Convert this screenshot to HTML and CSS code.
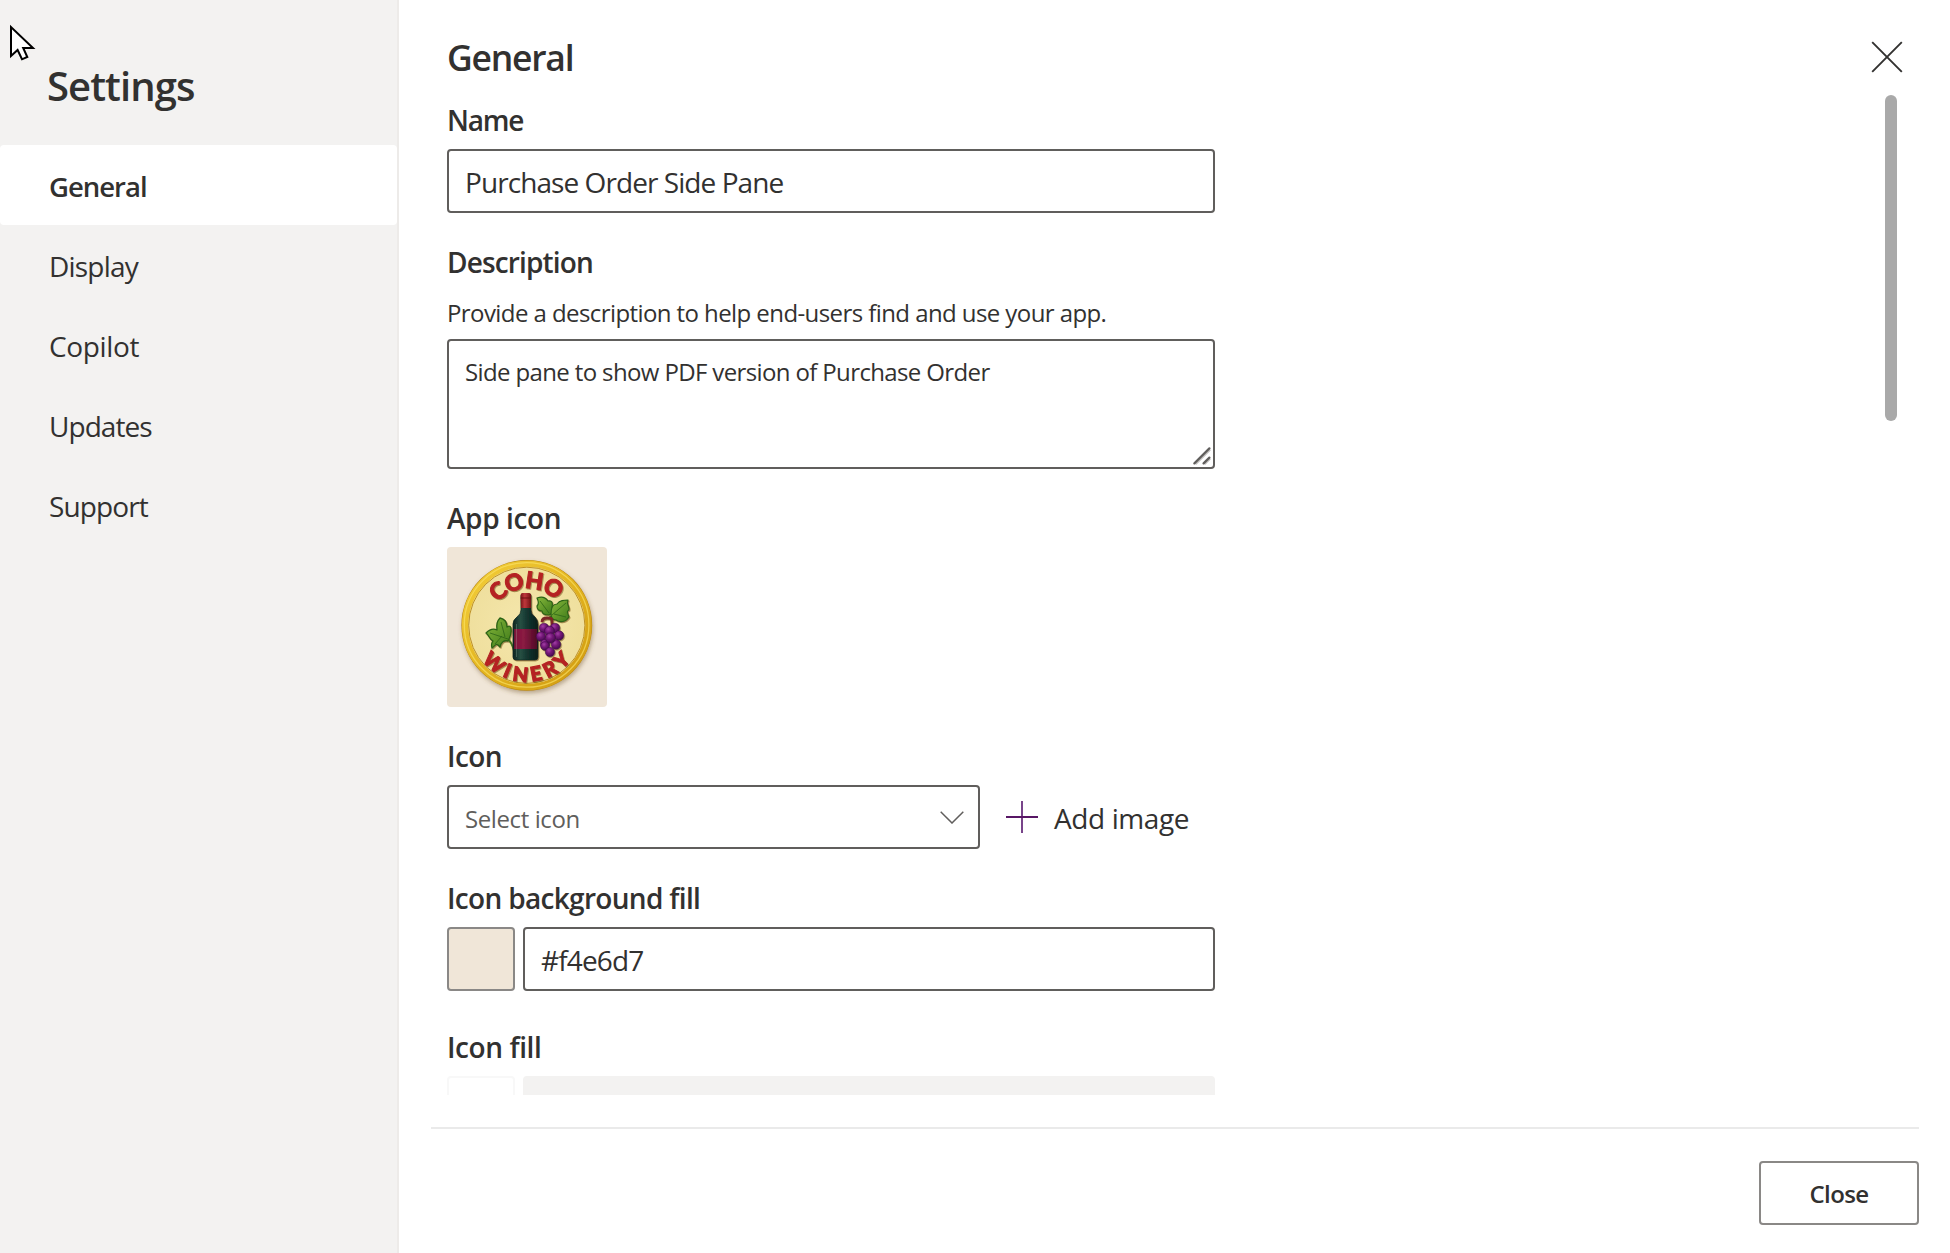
FILE: index.html
```html
<!DOCTYPE html>
<html lang="en">
<head>
<meta charset="utf-8">
<title>Settings</title>
<link rel="stylesheet" href="styles.css">
</head>
<body>
<div class="dialog">
  <aside class="sidebar">
    <h1 class="sidebar-title"><span class="t-settings">Settings</span></h1>
    <nav class="nav">
      <a class="nav-item active"><span class="t-nav-general">General</span></a>
      <a class="nav-item"><span class="t-display">Display</span></a>
      <a class="nav-item"><span class="t-copilot">Copilot</span></a>
      <a class="nav-item"><span class="t-updates">Updates</span></a>
      <a class="nav-item"><span class="t-support">Support</span></a>
    </nav>
  </aside>

  <main class="main">
    <header class="main-header">
      <h2 class="main-title">General</h2>
      <button class="dismiss" aria-label="Dismiss">
        <svg width="32" height="32" viewBox="0 0 32 32"><path d="M1.2 1.2 30.8 30.8M30.8 1.2 1.2 30.8" stroke="#323130" stroke-width="1.9" fill="none"/></svg>
      </button>
    </header>

    <div class="scroll-area">
      <form class="form">
        <label class="label t-name">Name</label>
        <input class="field t-value" type="text" value="Purchase Order Side Pane">

        <label class="label t-desc">Description</label>
        <p class="hint">Provide a description to help end-users find and use your app.</p>
        <div class="textarea">
          <span class="textarea-text">Side pane to show PDF version of Purchase Order</span>
          <svg class="grip" width="18" height="18" viewBox="0 0 18 18" fill="none" stroke-linecap="round"><path d="M3.2 17 17 3.2M12.2 17 17 12.2" stroke="#c8c6c4" stroke-width="1.5"/><path d="M1.4 16.4 16.4 1.4M10.6 16.4 16.4 10.6" stroke="#605e5c" stroke-width="2.2"/></svg>
        </div>

        <label class="label t-appicon">App icon</label>
        <div class="app-icon">
          <svg width="160" height="160" viewBox="0 0 160 160">
            <defs>
              <linearGradient id="ring" x1="0" y1="0" x2="1" y2="1"><stop offset="0" stop-color="#f4cf3a"/><stop offset=".5" stop-color="#e3b521"/><stop offset="1" stop-color="#cf980f"/></linearGradient>
              <radialGradient id="face"><stop offset="0" stop-color="#f5e7ad"/><stop offset="1" stop-color="#efdf9d"/></radialGradient>
              <linearGradient id="glass"><stop offset="0" stop-color="#0c2420"/><stop offset=".3" stop-color="#284f43"/><stop offset=".55" stop-color="#143730"/><stop offset="1" stop-color="#081d1a"/></linearGradient>
              <linearGradient id="tag"><stop offset="0" stop-color="#7d1239"/><stop offset=".4" stop-color="#8b1b43"/><stop offset="1" stop-color="#4f0a25"/></linearGradient>
              <linearGradient id="cap"><stop offset="0" stop-color="#7c1419"/><stop offset=".4" stop-color="#bf383b"/><stop offset="1" stop-color="#741015"/></linearGradient>
              <radialGradient id="grape" cx=".38" cy=".32" r=".7"><stop offset="0" stop-color="#a23fa5"/><stop offset=".45" stop-color="#741878"/><stop offset="1" stop-color="#440a4d"/></radialGradient>
              <linearGradient id="leaf" x1="0" y1="0" x2="1" y2="1"><stop offset="0" stop-color="#86b83a"/><stop offset="1" stop-color="#3f7a1b"/></linearGradient>
              <filter id="drop" x="-20%" y="-20%" width="140%" height="140%"><feDropShadow dx="1" dy="2.5" stdDeviation="2" flood-color="#73562c" flood-opacity=".45"/></filter>
              <filter id="lift" x="-20%" y="-20%" width="140%" height="140%"><feDropShadow dx=".8" dy="1" stdDeviation=".6" flood-color="#6b4a18" flood-opacity=".6"/></filter>
              <path id="arc-top" d="M42.7 79.3a38 38 0 0 1 76 0"/>
              <path id="arc-bottom" d="M23.2 78.3a56.5 56.5 0 0 0 113 0"/>
            </defs>
            <circle cx="79.8" cy="78.3" r="65.4" fill="#b7860e" filter="url(#drop)"/>
            <circle cx="79.8" cy="78.3" r="61.7" fill="url(#face)" stroke="url(#ring)" stroke-width="6.4"/>
            <circle cx="79.6" cy="77.9" r="62.3" fill="none" stroke="#fbe368" stroke-opacity=".65" stroke-width="1.3"/>
            <circle cx="79.8" cy="78.3" r="58.1" fill="none" stroke="#bd9024" stroke-width="1"/>
            <g class="badge-text" filter="url(#lift)">
              <text font-size="23"><textPath href="#arc-top" startOffset="49%" text-anchor="middle" textLength="66">COHO</textPath></text>
              <text font-size="20"><textPath href="#arc-bottom" startOffset="50%" text-anchor="middle" textLength="102">WINERY</textPath></text>
            </g>
            <g filter="url(#lift)" stroke-linejoin="round">
              <path d="M59 90q6 5 8 14" stroke="#3d741d" stroke-width="1.8" fill="none"/>
              <path d="M61 94C57 93 54 95 53 100C49 95 49 98 45 101C44 97 45 95 46 94C42 92 42 88 39 86C43 82 46 81 50 83C49 77 51 73 53 71C58 72 60 76 60 80C63 78 64 80 64 82C65 87 63 90 61 94Z" fill="url(#leaf)" stroke="#2c6317" stroke-width="1.3"/>
              <path d="M61 92 43 86M58 90 54 75M55 89l-7 8" stroke="#2c6317" stroke-width=".8" fill="none"/>
              <path d="M104 87q3-8-1-18" stroke="#45701e" stroke-width="2" fill="none"/>
              <path d="M102 68C97 68 95 66 95 64C91 64 90 61 90 59C92 57 91 53 90 51C95 49 99 51 101 54C105 53 106 56 105 60C106 64 105 67 102 68Z" fill="url(#leaf)" stroke="#2c6317" stroke-width="1.2"/>
              <path d="M104 67C104 61 106 57 110 57C113 53 117 53 121 53C119 57 123 60 122 63C119 64 121 67 122 70C119 75 113 76 109 73C106 73 104 71 104 67Z" fill="url(#leaf)" stroke="#2c6317" stroke-width="1.2"/>
              <path d="M102 66 93 54M105 68l14-12M107 67l12 3" stroke="#2c6317" stroke-width=".8" fill="none"/>
              <path d="M95 75q0-4 5-4q5 0 5 2v6" stroke="#7c2825" stroke-width="2.8" fill="none"/>
            </g>
            <g filter="url(#lift)">
              <path d="M74 49Q74 47 76 47H82Q84 47 84 49V63Q84 67 88 70Q91 73 91 77V110Q91 113 88 113H69Q66 113 66 110V77Q66 73 70 70Q74 67 74 63Z" fill="url(#glass)" stroke="#0d2822" stroke-width=".8"/>
              <path d="M73.6 48Q73.6 46 75.6 46H82Q84 46 84 48V61H74Z" fill="url(#cap)"/>
              <path d="M73.6 51h10.4" stroke="#6d0e13" stroke-width="1"/>
              <path d="M67.2 82h23v20h-23z" fill="url(#tag)"/>
              <path d="M69.5 77v33" stroke="#b8d2bd" stroke-opacity=".25" stroke-width="1"/>
            </g>
            <g fill="url(#grape)" stroke="#3b0745" stroke-width=".5" filter="url(#lift)">
              <circle cx="97" cy="81" r="4.8"/><circle cx="108" cy="81" r="4.8"/><circle cx="102.5" cy="84" r="5"/>
              <circle cx="94" cy="89.5" r="4.8"/><circle cx="112" cy="88.5" r="4.8"/><circle cx="98" cy="97" r="4.7"/>
              <circle cx="109" cy="97.5" r="4.8"/><circle cx="103.5" cy="91" r="5.1"/><circle cx="98" cy="99" r="4.4"/>
              <circle cx="103" cy="105" r="4.7"/>
            </g>
          </svg>
        </div>

        <label class="label t-icon">Icon</label>
        <div class="icon-row">
          <div class="select">
            <span class="placeholder">Select icon</span>
            <svg width="24" height="13" viewBox="0 0 24 13"><path d="M.7.8 12 12 23.3.8" fill="none" stroke="#605e5c" stroke-width="1.5"/></svg>
          </div>
          <button class="add-image" type="button">
            <svg width="32" height="32" viewBox="0 0 32 32"><path d="M16 0v32" stroke="#78448a" stroke-width="2"/><path d="M0 16h32" stroke="#581765" stroke-width="2"/></svg>
            <span class="t-add">Add image</span>
          </button>
        </div>

        <label class="label t-bgfill">Icon background fill</label>
        <div class="color-row">
          <span class="swatch"></span>
          <input class="field t-hex" type="text" value="#f4e6d7">
        </div>

        <label class="label label-last t-iconfill">Icon fill</label>
        <div class="color-row">
          <span class="swatch swatch-disabled"></span>
          <span class="field field-disabled"></span>
        </div>
      </form>
      <div class="scrollbar"><div class="thumb"></div></div>
    </div>

    <footer class="footer">
      <button class="close"><span class="t-close">Close</span></button>
    </footer>
  </main>
</div>
<svg class="cursor" width="28" height="40" viewBox="0 0 28 40"><path d="M3 3V32L9.6 26 14 35.3 19.3 33 15.2 24H25Z" fill="#fff" stroke="#000" stroke-width="2"/></svg>
</body>
</html>
```
FILE: styles.css
```css
* { box-sizing: border-box; }

body {
  margin: 0;
  color: #323130;
  background: #fff;
  font-family: "Open Sans", "Noto Sans", sans-serif;
  font-size: 28px;
  overflow: hidden;
}

button, input { font: inherit; color: inherit; }
button { background: none; border: 0; padding: 0; }

.dialog { display: flex; width: 100%; height: 1253px; }

/* Left navigation */
.sidebar {
  flex: none;
  width: 399px;
  background: #f3f2f1;
  border-right: 2px solid #edebe9;
}
.sidebar-title {
  margin: 0;
  height: 145px;
  padding: 58px 0 0 47px;
  font-size: 40px;
  line-height: 56px;
  font-weight: 600;
}
.nav { display: flex; flex-direction: column; }
.nav-item {
  height: 80px;
  padding-left: 49px;
  line-height: 82px;
  border-radius: 4px;
}
.nav-item.active { background: #fff; font-weight: 600; }

/* Main panel */
.main {
  flex: 1;
  display: flex;
  flex-direction: column;
  padding: 0 31px 28px 32px;
}
.main-header {
  display: flex;
  justify-content: space-between;
  height: 95px;
  padding: 33px 16px 0;
}
.main-title {
  margin: 0;
  font-size: 35.5px;
  line-height: 48px;
  font-weight: 600;
  letter-spacing: -1.25px;
}
.dismiss { height: 32px; margin-top: 8px; }
.dismiss svg, .add-image svg { display: block; }

.scroll-area {
  display: flex;
  justify-content: space-between;
  height: 1000px;
  padding: 0 22px 0 16px;
  overflow: hidden;
}
.scrollbar { width: 12px; }
.thumb { height: 326px; border-radius: 6px; background: #a9a9a9; }

/* Form */
.form { width: 768px; padding-top: 4px; }
.label {
  display: block;
  width: max-content;
  height: 40px;
  line-height: 42px;
  font-weight: 600;
  margin: 28px 0 10px;
}
.label:first-child { margin-top: 0; }
.label-last { margin-top: 35px; }
.field {
  display: block;
  width: 100%;
  height: 64px;
  padding: 2px 16px 0;
  border: 2px solid #605e5c;
  border-radius: 4px;
  background: #fff;
  outline: 0;
}
.field-disabled { background: #f3f2f1; border-color: #f3f2f1; }
.t-desc { margin-bottom: 13px; }
.hint {
  margin: 0 0 8px;
  padding-top: 1px;
  width: max-content;
  font-size: 24px;
  line-height: 36px;
  letter-spacing: -0.58px;
}
.textarea {
  display: flex;
  justify-content: space-between;
  height: 130px;
  padding: 13px 2px 2px 16px;
  border: 2px solid #605e5c;
  border-radius: 4px;
  font-size: 24px;
  line-height: 36px;
}
.textarea-text { white-space: nowrap; letter-spacing: -0.63px; }
.grip { align-self: flex-end; }

.app-icon {
  width: 160px;
  height: 160px;
  border-radius: 4px;
  background: #f0e6d8;
  overflow: hidden;
}
.app-icon svg { display: block; }
.badge-text {
  font-family: Lato, "Open Sans", sans-serif;
  font-weight: 900;
  fill: #b52222;
  stroke: #b52222;
  stroke-width: 1px;
}

.icon-row { display: flex; gap: 26px; }
.select {
  display: flex;
  align-items: center;
  justify-content: space-between;
  width: 533px;
  height: 64px;
  padding: 0 14px 0 16px;
  border: 2px solid #605e5c;
  border-radius: 4px;
  font-size: 24px;
  color: #605e5c;
}
.placeholder { padding-top: 2px; letter-spacing: -0.4px; }
.add-image { display: flex; align-items: center; gap: 16px; }

.color-row { display: flex; gap: 8px; }
.color-row .field { flex: 1; min-width: 0; }
.swatch {
  flex: none;
  width: 68px;
  height: 64px;
  border: 2px solid #8a8886;
  border-radius: 4px;
  background: #f0e6d8;
}
.swatch-disabled { background: #fff; border-color: #f8f8f8; }

/* Footer */
.footer {
  display: flex;
  justify-content: flex-end;
  margin-top: 32px;
  padding-top: 32px;
  border-top: 2px solid #eaeaea;
}
.close {
  width: 160px;
  height: 64px;
  padding-top: 1px;
  border: 2px solid #8a8886;
  border-radius: 4px;
  font-size: 24px;
  font-weight: 600;
}

/* Tracking */
.t-settings { letter-spacing: -0.93px; }
.t-nav-general { font-size: 27.5px; letter-spacing: -1px; }
.t-display { letter-spacing: -0.8px; }
.t-copilot { letter-spacing: -0.36px; }
.t-updates { letter-spacing: -0.95px; }
.t-support { letter-spacing: -0.87px; }
.t-name { letter-spacing: -1.2px; }
.t-value { letter-spacing: -0.93px; }
.t-desc { letter-spacing: -0.85px; }
.t-appicon { letter-spacing: -0.4px; }
.t-icon { letter-spacing: -0.6px; }
.t-add { padding-top: 2px; letter-spacing: -0.4px; }
.t-bgfill { letter-spacing: -0.68px; }
.t-hex { letter-spacing: -0.85px; }
.t-iconfill { letter-spacing: -0.42px; }
.t-close { letter-spacing: -0.6px; }

.cursor { position: absolute; left: 8px; top: 24px; }
```
